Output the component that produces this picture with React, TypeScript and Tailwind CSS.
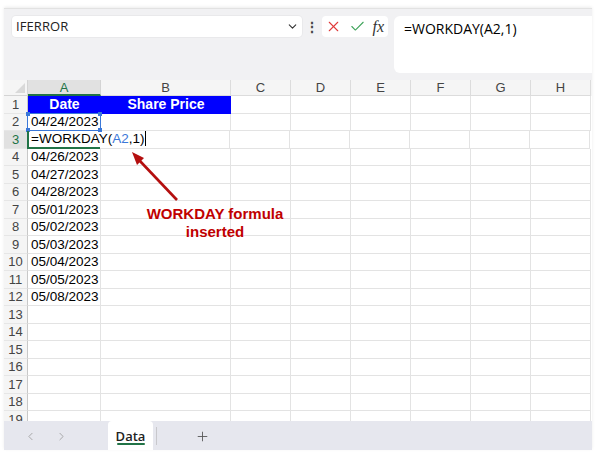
import React from 'react';
import { X, Check, ChevronDown, ChevronLeft, ChevronRight, Plus } from 'lucide-react';

const COLS = [
  { key: 'A', w: 'w-[73px]' },
  { key: 'B', w: 'w-[130px]' },
  { key: 'C', w: 'w-[60px]' },
  { key: 'D', w: 'w-[60px]' },
  { key: 'E', w: 'w-[60px]' },
  { key: 'F', w: 'w-[60px]' },
  { key: 'G', w: 'w-[60px]' },
  { key: 'H', w: 'w-[60px]' },
];

const DATES = [
  '04/24/2023',
  '',
  '04/26/2023',
  '04/27/2023',
  '04/28/2023',
  '05/01/2023',
  '05/02/2023',
  '05/03/2023',
  '05/04/2023',
  '05/05/2023',
  '05/08/2023',
];

const Corners = () => (
  <>
    <span className="absolute -left-[2px] -top-[2px] w-[4px] h-[4px] bg-[#3b78d8]" />
    <span className="absolute -right-[2px] -top-[2px] w-[4px] h-[4px] bg-[#3b78d8]" />
    <span className="absolute -left-[2px] -bottom-[2px] w-[4px] h-[4px] bg-[#3b78d8]" />
    <span className="absolute -right-[2px] -bottom-[2px] w-[4px] h-[4px] bg-[#3b78d8]" />
  </>
);

function Cell({ row, col }: { row: number; col: string }) {
  const base = 'h-[17.5px] shrink-0 border-r border-b border-[#e3e3e3] relative';
  const w = COLS.find((c) => c.key === col)!.w;

  if (row === 1 && (col === 'A' || col === 'B')) {
    return (
      <div className={`${w} h-[17.5px] shrink-0 bg-[#0000ff] border-b border-[#0000ff] flex items-center justify-center text-white font-bold text-[14px] leading-none`}>
        {col === 'A' ? 'Date' : 'Share Price'}
      </div>
    );
  }

  if (col === 'A' && row === 2) {
    return (
      <div className={`${w} ${base} flex items-center`}>
        <div className="absolute -inset-[1px] border border-[#3b78d8] z-10 pointer-events-none">
          <Corners />
        </div>
        <span className="pl-[3px] text-[13.5px] leading-none text-black">{DATES[0]}</span>
      </div>
    );
  }

  if (col === 'A' && row === 3) {
    return (
      <div className={`${w} h-[17.5px] shrink-0 relative flex items-center border-l-[2px] border-b-[2px] border-[#217346] -ml-[1px] z-20`}>
        <span className="pl-[2px] text-[13.5px] leading-none text-black whitespace-nowrap flex items-center">
          =WORKDAY(<span className="text-[#3b78d8]">A2</span>,1)
          <span className="ml-[1px] inline-block w-[1px] h-[15px] bg-black" />
        </span>
      </div>
    );
  }

  if (col === 'A' && row >= 2 && row <= 12) {
    return (
      <div className={`${w} ${base} flex items-center`}>
        <span className="pl-[3px] text-[13.5px] leading-none text-black">{DATES[row - 2]}</span>
      </div>
    );
  }

  if (row === 3 && col === 'B') {
    return <div className={`${w} h-[17.5px] shrink-0 border-r border-b border-[#e3e3e3]`} />;
  }

  return <div className={`${w} ${base}`} />;
}

export default function App() {
  const rows = Array.from({ length: 19 }, (_, i) => i + 1);

  return (
    <div className="w-[598px] h-[456px] bg-white overflow-hidden" style={{ fontFamily: '"Liberation Sans", Arial, sans-serif' }}>
      <div className="ml-[4px] mt-[8px] w-[588px] h-[442px] bg-[#f1f1f3] flex flex-col overflow-hidden border-t border-[#e2e2e2] shadow-[0_-1px_3px_rgba(0,0,0,0.08)]">
        {/* formula bar */}
        <div className="h-[71px] shrink-0 flex items-start pt-[7px] pl-[8px]">
          <div className="w-[290px] h-[21px] bg-white rounded-[4px] flex items-center justify-between pl-[4px] pr-[3px] shadow-[0_0_0_1px_rgba(0,0,0,0.03)]">
            <span className="text-[13px] text-[#222] tracking-[0.1px]" style={{ fontFamily: '"Open Sans", "Noto Sans", sans-serif' }}>
              IFERROR
            </span>
            <ChevronDown size={13} strokeWidth={2} className="text-[#333]" />
          </div>
          <div className="w-[20px] h-[21px] flex items-center justify-center text-[#444] text-[14px] font-bold leading-none">⋮</div>
          <div className="w-[66px] h-[21px] bg-white rounded-[4px] flex items-center justify-between px-[3px]">
            <X size={17} strokeWidth={1.5} className="text-[#e03a3a]" />
            <Check size={17} strokeWidth={1.5} className="text-[#3ea35a]" />
            <span className="italic text-[16px] text-[#333] leading-none pr-[1px]" style={{ fontFamily: '"Liberation Serif", "Times New Roman", serif' }}>
              fx
            </span>
          </div>
          <div className="ml-[6px] flex-1 h-[57px] bg-white rounded-l-[6px] pl-[10px] pt-[1px]">
            <span className="text-[14px] text-black" style={{ fontFamily: '"Open Sans", "Noto Sans", sans-serif' }}>
              =WORKDAY(A2,1)
            </span>
          </div>
        </div>

        {/* grid */}
        <div className="h-[341px] shrink-0 bg-white overflow-hidden relative">
          {/* column headers */}
          <div className="flex h-[16px] bg-[#f5f5f5]">
            <div className="w-[24px] shrink-0 border-r border-b border-[#d4d4d4] relative overflow-hidden">
              <div className="absolute right-[2px] bottom-[2px] w-0 h-0 border-l-[10px] border-l-transparent border-b-[10px] border-b-[#d9d9d9]" />
            </div>
            {COLS.map((c) =>
              c.key === 'A' ? (
                <div key={c.key} className={`${c.w} shrink-0 bg-[#e1e1e1] border-r border-[#d4d4d4] border-b-[2px] border-b-[#217346] flex items-center justify-center text-[13px] text-[#217346] leading-none`}>
                  {c.key}
                </div>
              ) : (
                <div key={c.key} className={`${c.w} shrink-0 border-r border-b border-[#dcdcdc] flex items-center justify-center text-[13px] text-[#444] leading-none`}>
                  {c.key}
                </div>
              )
            )}
          </div>

          {rows.map((r) => (
            <div key={r} className="flex">
              <div
                className={`w-[24px] h-[17.5px] shrink-0 border-r border-[#c8c8c8] border-b border-b-[#e6e6e6] flex items-center justify-center text-[13px] leading-none ${
                  r === 3 ? 'bg-[#e1e1e1] text-[#217346]' : 'bg-[#f5f5f5] text-[#444]'
                }`}
              >
                {r}
              </div>
              {COLS.map((c) => (
                <Cell key={c.key} row={r} col={c.key} />
              ))}
            </div>
          ))}

          {/* annotation */}
          <svg className="absolute left-0 top-0 pointer-events-none" width="588" height="341">
            <line x1="173" y1="120" x2="135" y2="80" stroke="#b40f0f" strokeWidth="2.6" />
            <polygon points="128,72 140,78 133,85" fill="#b40f0f" />
          </svg>
          <div className="absolute left-[129px] top-[125px] w-[164px] text-center text-[15px] font-bold text-[#c00000] leading-[18px]">
            WORKDAY formula
            <br />
            inserted
          </div>
        </div>

        {/* sheet tabs */}
        <div className="h-[30px] shrink-0 bg-[#e6e7ee] flex items-center" style={{ fontFamily: '"Open Sans", "Noto Sans", sans-serif' }}>
          <div className="w-[104px] flex items-center pl-[20px] gap-[18px] text-[#9a9a9a]">
            <ChevronLeft size={13} strokeWidth={1.5} />
            <ChevronRight size={13} strokeWidth={1.5} />
          </div>
          <div className="w-[45px] h-[30px] bg-white rounded-t-[4px] flex flex-col items-center justify-center relative">
            <span className="text-[13px] font-semibold text-[#222] leading-none">Data</span>
            <span className="absolute bottom-[6px] w-[28px] h-[2px] bg-[#217346] rounded" />
          </div>
          <div className="ml-[3px] w-[1px] h-[18px] bg-[#c8c8cc]" />
          <div className="ml-[38px] text-[#555]">
            <Plus size={15} strokeWidth={1.4} />
          </div>
        </div>
      </div>
    </div>
  );
}
